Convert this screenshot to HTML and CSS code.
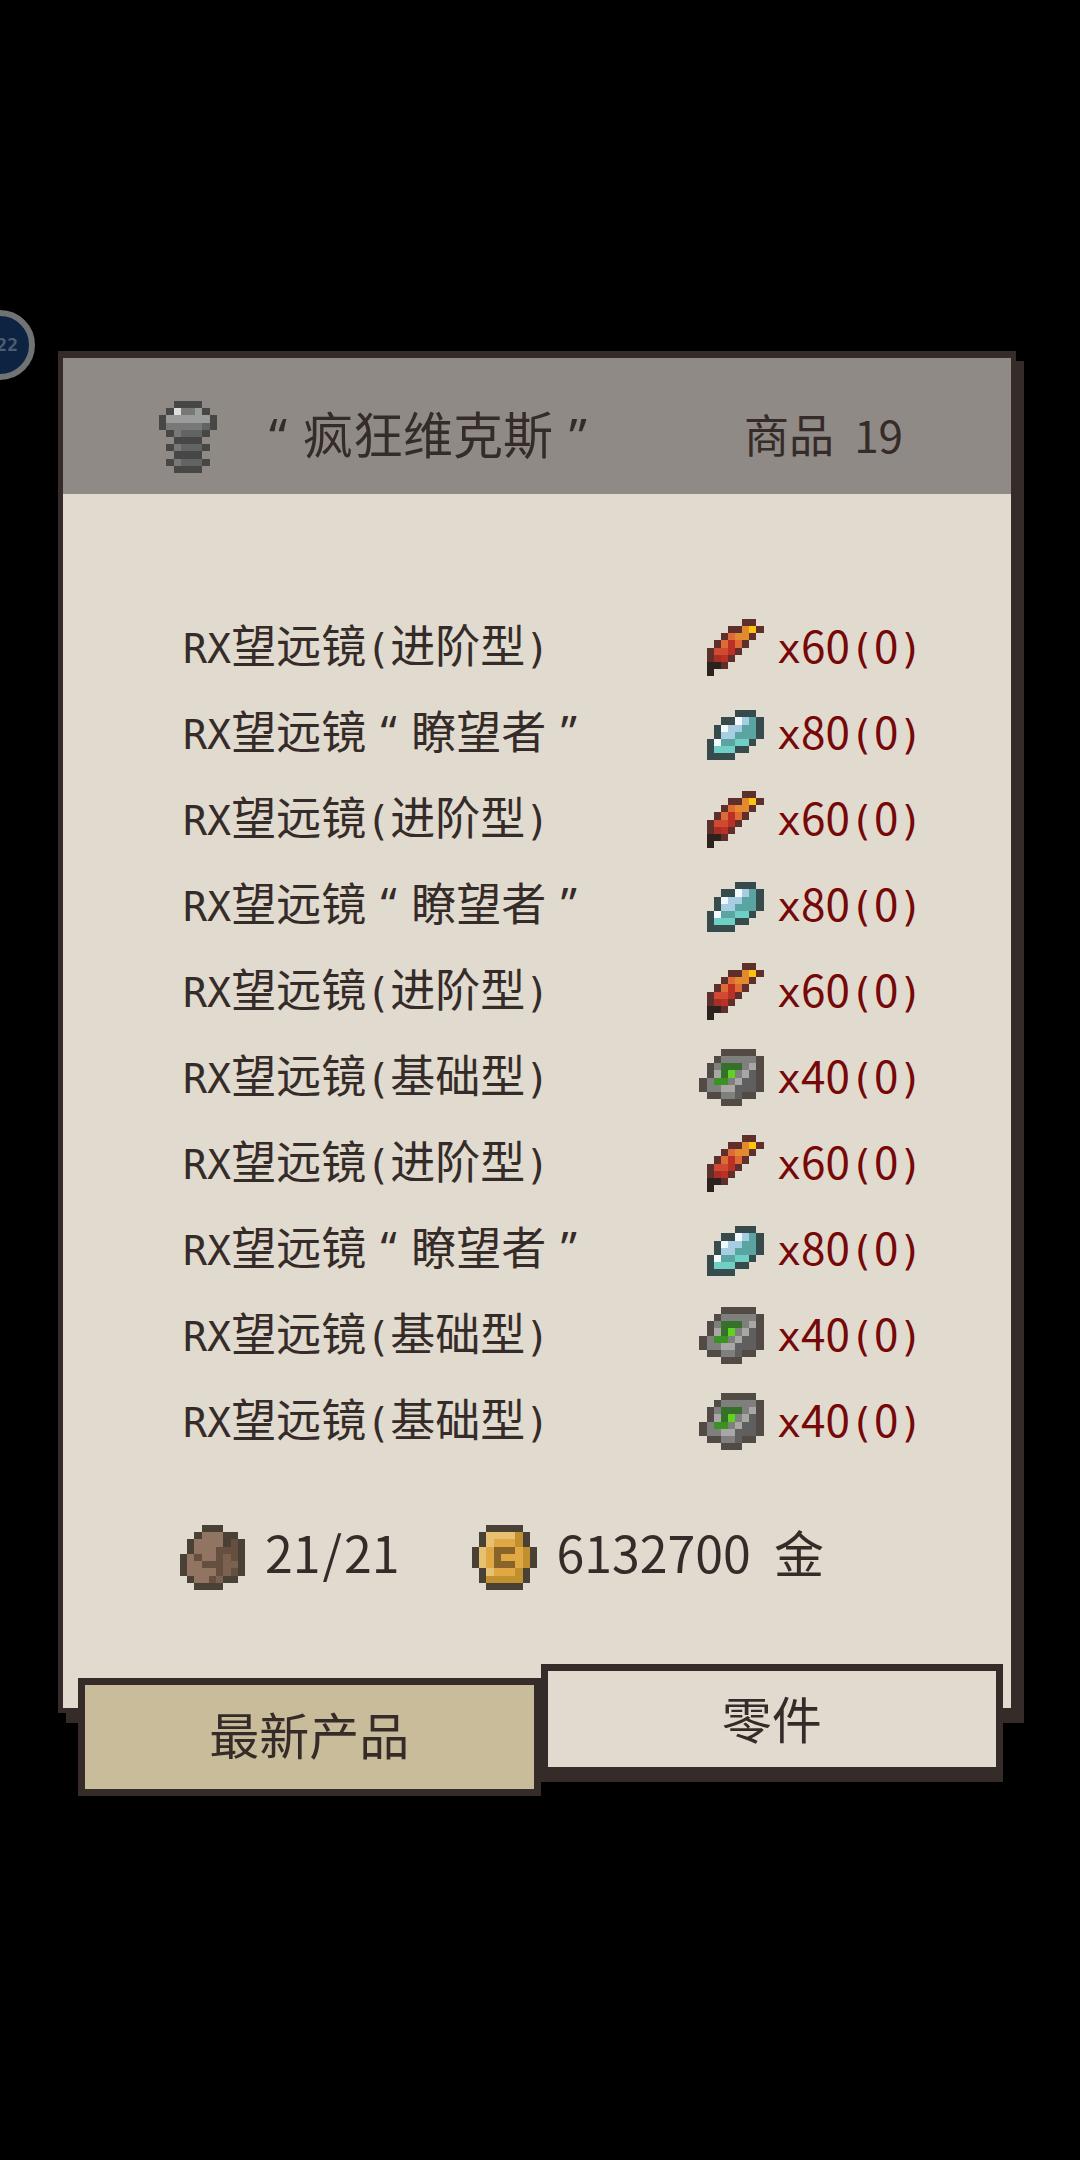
FILE: index.html
```html
<!DOCTYPE html>
<html lang="zh-CN">
	<head>
		<meta charset="UTF-8">
		<meta name="viewport" content="width=device-width, initial-scale=1">
		<title>疯狂维克斯</title>
		<link rel="stylesheet" href="styles.css">
	</head>
	<body>
		<!-- 像素图标 -->
		<svg class="defs">
			<symbol id="feather" viewBox="0 0 9 8">
				<path stroke="#5f302b" d="M6 .5h2M4 1.5h2M8 1.5h1M3 2.5h1M7 2.5h1M2 3.5h1M6 3.5h1M1 4.5h1M5 4.5h1M1 5.5h1M4 5.5h1M3 6.5h1"/>
				<path stroke="#2d211e" d="M1 6.5h2M1 7.5h1"/>
				<path stroke="#fcc40a" d="M7 1.5h1"/>
				<path stroke="#e38a31" d="M6 1.5h1M5 2.5h2"/>
				<path stroke="#de6b35" d="M4 2.5h1M5 3.5h1M3 3.5h1"/>
				<path stroke="#cf4a31" d="M3 4.5h1M2 4.5h1"/>
				<path stroke="#bc2f25" d="M4 3.5h1M4 4.5h1M3 5.5h1"/>
				<path stroke="#a62e26" d="M2 5.5h1"/>
			</symbol>
			<symbol id="crystal" viewBox="0 0 9 8">
				<g transform="translate(1 .75)">
					<path stroke="#384b4c" d="M4 .5h3M2 1.5h2M7 1.5h1M1 2.5h1M7 2.5h1M1 3.5h1M7 3.5h1M0 4.5h1M6 4.5h1M0 5.5h1M4 5.5h2M0 6.5h4"/>
					<path stroke="#f1fbff" d="M4 1.5h1M2 2.5h1M1 4.5h1"/>
					<path stroke="#a6cde2" d="M5 1.5h1M3 2.5h2M2 3.5h2"/>
					<path stroke="#5aa5a2" d="M6 1.5h1M5 2.5h2M4 3.5h3M2 4.5h2"/>
					<path stroke="#70cfc5" d="M4 4.5h2M1 5.5h3"/>
				</g>
			</symbol>
			<symbol id="ore" viewBox="0 0 9 8">
				<path stroke="#514a45" d="M3 .5h5M2 1.5h1M8 1.5h1M1 2.5h1M8 2.5h1M1 3.5h1M8 3.5h1M0 4.5h1M8 4.5h1M0 5.5h1M8 5.5h1M1 6.5h2M6 6.5h2M3 7.5h3"/>
				<path stroke="#7f7f7d" d="M3 1.5h5M2 2.5h1M6 2.5h1M5 3.5h1M1 4.5h1M4 4.5h1M1 5.5h2M3 6.5h2"/>
				<path stroke="#a9a7a6" d="M7 2.5h1M2 3.5h1M6 3.5h1M5 4.5h1M3 5.5h2"/>
				<path stroke="#605f5f" d="M7 3.5h1M6 4.5h2M5 5.5h3M5 6.5h1"/>
				<path stroke="#37702a" d="M3 2.5h3M3 3.5h1"/>
				<path stroke="#3a9222" d="M2 4.5h2"/>
				<path stroke="#5dd41d" d="M4 3.5h1"/>
			</symbol>
			<symbol id="screw" viewBox="0 0 8 10">
				<path stroke="#474746" d="M2 .5h4M1 1.5h1M6 1.5h1M0 2.5h1M7 2.5h1M0 3.5h1M7 3.5h1M1 4.5h1M6 4.5h1M2 5.5h4M1 6.5h1M6 6.5h1M2 7.5h4M1 8.5h1M6 8.5h1M2 9.5h4"/>
				<path stroke="#dedede" d="M2 1.5h1"/>
				<path stroke="#9a9c99" d="M5 1.5h1M1 2.5h6"/>
				<path stroke="#777877" d="M3 1.5h2M1 3.5h5M2 4.5h1M2 6.5h1M2 8.5h1"/>
				<path stroke="#626363" d="M6 3.5h1M3 4.5h3M3 6.5h3M3 8.5h3"/>
			</symbol>
			<symbol id="bag" viewBox="0 0 9 9">
				<path stroke="#494135" d="M3 .5h3M2 1.5h1M6 1.5h2M1 2.5h1M6 2.5h1M8 2.5h1M1 3.5h1M8 3.5h1M0 4.5h1M8 4.5h1M0 5.5h1M8 5.5h1M0 6.5h1M8 6.5h1M1 7.5h1M6 7.5h2M2 8.5h4"/>
				<path stroke="#917562" d="M3 1.5h3M2 2.5h4M2 3.5h3M1 4.5h1M3 4.5h2M1 5.5h2M1 6.5h4M2 7.5h2"/>
				<path stroke="#65503f" d="M7 2.5h1M5 3.5h3M2 4.5h1M5 4.5h1M7 4.5h1M3 5.5h3M5 6.5h1M7 6.5h1M4 7.5h1"/>
				<path stroke="#7b6250" d="M6 4.5h1M6 5.5h2M6 6.5h1M5 7.5h1"/>
			</symbol>
			<symbol id="coin" viewBox="0 0 9 9">
				<path stroke="#494135" d="M2 .5h5M1 1.5h1M7 1.5h1M1 2.5h1M7 2.5h1M0 3.5h1M8 3.5h1M0 4.5h1M8 4.5h1M0 5.5h1M8 5.5h1M1 6.5h1M7 6.5h1M1 7.5h1M7 7.5h1M2 8.5h5"/>
				<path stroke="#e8c071" d="M2 1.5h4M2 2.5h1M1 3.5h1M1 4.5h1M1 5.5h1M2 6.5h1"/>
				<path stroke="#dfa843" d="M3 2.5h3M2 3.5h1M6 3.5h1M2 4.5h1M4 4.5h3M2 5.5h1M6 5.5h1M3 6.5h3"/>
				<path stroke="#c0902f" d="M6 1.5h1M6 2.5h1M7 3.5h1M7 4.5h1M7 5.5h1M6 6.5h1M2 7.5h5"/>
				<path stroke="#88642b" d="M3 3.5h3M3 4.5h1M3 5.5h3"/>
			</symbol>
		</svg>

		<div class="badge">22</div>

		<div class="shop">
			<div class="panel">
				<div class="header">
					<svg class="screw"><use href="#screw"/></svg>
					<h1 class="title"><span class="quote">“</span>疯狂维克斯<span class="quote">”</span></h1>
					<p class="count">商品 <span class="num">19</span></p>
				</div>
				<table class="goods">
					<tr>
						<td><span class="half">RX</span>望远镜<span class="half">(</span>进阶型<span class="half">)</span></td>
						<td class="icon"><svg><use href="#feather"/></svg></td>
						<td class="price">x<span class="num">60</span>(<span class="num">0</span>)</td>
					</tr>
					<tr>
						<td><span class="half">RX</span>望远镜<span class="quote">“</span>瞭望者<span class="quote">”</span></td>
						<td class="icon"><svg><use href="#crystal"/></svg></td>
						<td class="price">x<span class="num">80</span>(<span class="num">0</span>)</td>
					</tr>
					<tr>
						<td><span class="half">RX</span>望远镜<span class="half">(</span>进阶型<span class="half">)</span></td>
						<td class="icon"><svg><use href="#feather"/></svg></td>
						<td class="price">x<span class="num">60</span>(<span class="num">0</span>)</td>
					</tr>
					<tr>
						<td><span class="half">RX</span>望远镜<span class="quote">“</span>瞭望者<span class="quote">”</span></td>
						<td class="icon"><svg><use href="#crystal"/></svg></td>
						<td class="price">x<span class="num">80</span>(<span class="num">0</span>)</td>
					</tr>
					<tr>
						<td><span class="half">RX</span>望远镜<span class="half">(</span>进阶型<span class="half">)</span></td>
						<td class="icon"><svg><use href="#feather"/></svg></td>
						<td class="price">x<span class="num">60</span>(<span class="num">0</span>)</td>
					</tr>
					<tr>
						<td><span class="half">RX</span>望远镜<span class="half">(</span>基础型<span class="half">)</span></td>
						<td class="icon"><svg><use href="#ore"/></svg></td>
						<td class="price">x<span class="num">40</span>(<span class="num">0</span>)</td>
					</tr>
					<tr>
						<td><span class="half">RX</span>望远镜<span class="half">(</span>进阶型<span class="half">)</span></td>
						<td class="icon"><svg><use href="#feather"/></svg></td>
						<td class="price">x<span class="num">60</span>(<span class="num">0</span>)</td>
					</tr>
					<tr>
						<td><span class="half">RX</span>望远镜<span class="quote">“</span>瞭望者<span class="quote">”</span></td>
						<td class="icon"><svg><use href="#crystal"/></svg></td>
						<td class="price">x<span class="num">80</span>(<span class="num">0</span>)</td>
					</tr>
					<tr>
						<td><span class="half">RX</span>望远镜<span class="half">(</span>基础型<span class="half">)</span></td>
						<td class="icon"><svg><use href="#ore"/></svg></td>
						<td class="price">x<span class="num">40</span>(<span class="num">0</span>)</td>
					</tr>
					<tr>
						<td><span class="half">RX</span>望远镜<span class="half">(</span>基础型<span class="half">)</span></td>
						<td class="icon"><svg><use href="#ore"/></svg></td>
						<td class="price">x<span class="num">40</span>(<span class="num">0</span>)</td>
					</tr>
				</table>
				<div class="status">
					<svg><use href="#bag"/></svg>
					<p class="bag">21<span class="slash">/</span>21</p>
					<svg><use href="#coin"/></svg>
					<p class="gold">6132700 <span class="unit">金</span></p>
				</div>
			</div>
			<div class="tabs">
				<button type="button" class="tab">最新产品</button>
				<button type="button" class="tab active">零件</button>
			</div>
		</div>
	</body>
</html>
```
FILE: styles.css
```css
*{
	margin: 0;
	padding: 0;
	box-sizing: border-box;
}
body{
	min-height: 100vh;
	display: flex;
	align-items: center;
	background-color: #000;
	color: #352c29;
	font-family: "Noto Sans CJK SC", sans-serif;
}
svg{
	display: block;
	flex: none;
	stroke-width: 1;
	shape-rendering: crispEdges;
}
.defs{
	position: absolute;
	width: 0;
	height: 0;
}
/* 悬浮球 */
.badge{
	position: absolute;
	left: -35px;
	top: 310px;
	width: 70px;
	height: 70px;
	border: 6px solid #707274;
	border-radius: 50%;
	background-color: #0c2342;
	color: #4c5d70;
	font: bold 18px/58px "DejaVu Sans Mono", monospace;
	text-align: right;
	padding-right: 11px;
}
.shop{
	flex: 1;
	margin: 0 64px 14px 58px;
}
.panel{
	border: 5px solid #352c29;
	border-top-width: 7px;
	background-color: #e1dacf;
	box-shadow: 8px 10px 0 #352c29;
}
.header{
	display: flex;
	align-items: center;
	height: 136px;
	padding: 22px 108px 0 96px;
	background-color: #8f8a85;
}
.screw{
	width: 58px;
	height: 72px;
}
.title{
	flex: 1;
	margin-left: 36px;
	padding-bottom: 6px;
	font-size: 50px;
	font-weight: normal;
	line-height: 60px;
}
.count{
	padding-bottom: 6px;
	font-size: 45px;
	line-height: 60px;
}
.count .num{
	margin-left: 10px;
}
.num{
	font-family: "Noto Sans CJK SC", sans-serif;
	font-size: 44px;
}
.half{
	font-family: "DejaVu Sans Mono", monospace;
	font-size: 40px;
}
/* 引号占一个字宽 */
.quote{
	display: inline-block;
	width: 1em;
	font-family: "Noto Sans", sans-serif;
	text-align: center;
}
.goods{
	width: 100%;
	margin-top: 111px;
	border-collapse: collapse;
}
.goods td{
	height: 86px;
	font-size: 45px;
	line-height: 60px;
	padding: 0 0 2px 120px;
	white-space: nowrap;
}
.goods .icon{
	width: 78px;
	padding: 0;
}
.goods .icon svg{
	width: 65px;
	height: 57px;
}
.goods .price{
	width: 234px;
	padding: 0 88px 2px 0;
	color: #760808;
	font-family: "DejaVu Sans Mono", monospace;
	font-size: 40px;
}
.status{
	display: flex;
	align-items: center;
	padding: 60px 88px 118px 117px;
	font-size: 50px;
	line-height: 60px;
}
.status svg{
	width: 65px;
	height: 65px;
}
.status p{
	margin: -12px 0 0 20px;
	white-space: nowrap;
}
.status .bag{
	margin-right: 72px;
}
.slash{
	padding: 0 2px;
}
.unit{
	margin-left: 12px;
}
.tabs{
	position: relative;
	display: flex;
	align-items: flex-start;
	margin: -49px 13px 0 20px;
}
.tab{
	flex: 1;
	height: 118px;
	margin-top: 14px;
	padding-bottom: 8px;
	border: 7px solid #352c29;
	background-color: #c8bc9b;
	color: #352c29;
	font-family: inherit;
	font-size: 50px;
	line-height: 60px;
}
.tab.active{
	margin-top: 0;
	padding-bottom: 4px;
	border-bottom-width: 15px;
	background-color: #e1dacf;
}
```
